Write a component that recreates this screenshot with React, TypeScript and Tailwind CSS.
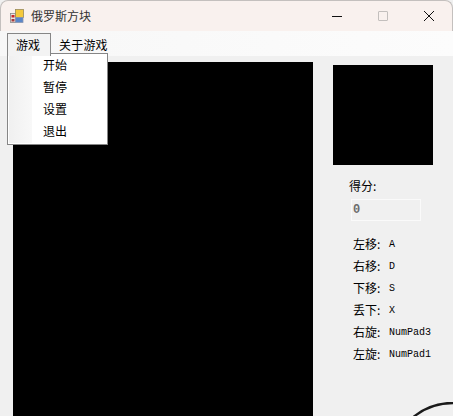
const font = { cjk: "font-['Noto_Sans_CJK_SC','Liberation_Sans',sans-serif]" };

const keys = [
  ["左移:", "A"],
  ["右移:", "D"],
  ["下移:", "S"],
  ["丢下:", "X"],
  ["右旋:", "NumPad3"],
  ["左旋:", "NumPad1"],
];

function AppIcon() {
  return (
    <svg width="14" height="14" viewBox="0 0 14 14" className="shrink-0">
      <rect x="0.5" y="4.5" width="5" height="9" fill="#e8e4e0" stroke="#8a8a8a" strokeWidth="0.8" />
      <rect x="1.5" y="6" width="3" height="2.5" fill="#c8262a" />
      <rect x="1.5" y="10" width="3" height="2.5" fill="#a83a3a" />
      <rect x="5.5" y="0.5" width="8" height="8" fill="#f5c93c" stroke="#9a8a5a" strokeWidth="0.8" />
      <rect x="5.5" y="8.5" width="7.5" height="5" fill="#5a86c8" stroke="#8a96b0" strokeWidth="0.8" />
    </svg>
  );
}

export default function App() {
  return (
    <div className={`relative w-[453px] h-[416px] overflow-hidden bg-[#f0f0f0] ${font.cjk} text-[12px] text-black`}>
      {/* title bar */}
      <div className="h-[31px] flex items-center bg-[#f9f1ee] rounded-t-lg border-t border-x border-[#c4c0be] pl-[9px]">
        <AppIcon />
        <span className="ml-[7px] text-[#333]">俄罗斯方块</span>
        <div className="ml-auto flex items-center">
          <svg width="12" height="12" viewBox="0 0 12 12" className="mr-[35px]">
            <path d="M1 6.5h10" stroke="#111" strokeWidth="1" />
          </svg>
          <div className="w-[10px] h-[10px] border border-[#c3bfbd] rounded-[1px] mr-[35px]" />
          <svg width="12" height="12" viewBox="0 0 12 12" className="mr-[17px]">
            <path d="M1 1l10 10M11 1L1 11" stroke="#111" strokeWidth="1" />
          </svg>
        </div>
      </div>

      {/* menu bar */}
      <div className="h-[25px] flex items-end bg-gradient-to-r from-[#f7f7f7] to-[#fcfcfc] pl-[7px]">
        <div className="h-[23px] w-[44px] flex items-center pl-[8px] bg-[#f3f3f3] border-x border-t border-[#868686] z-10">游戏</div>
        <div className="h-[23px] pl-[8px] flex items-center tracking-[0.2px]">关于游戏</div>
      </div>

      {/* game area */}
      <div className="flex pl-[13px] pt-[6px]">
        <div className="w-[300px] h-[354px] bg-black shrink-0" />
        <div className="ml-[20px] pt-[3px] flex flex-col">
          <div className="w-[100px] h-[100px] bg-black" />
          <div className="ml-[16px] mt-[13px] leading-[16px]">得分:</div>
          <div className="ml-[18px] mt-[5px] w-[70px] h-[22px] flex items-center pl-[1px] border border-[#fafafa] text-[#6d6d6d] font-['Liberation_Mono',monospace] text-[12px] font-bold">0</div>
          <div className="ml-[20px] mt-[12px] flex flex-col">
            {keys.map(([label, key]) => (
              <div key={label} className="h-[22px] flex items-center whitespace-nowrap">
                <span className="w-[36px]">{label}</span>
                <span className="font-['Liberation_Mono',monospace] text-[10px]">{key}</span>
              </div>
            ))}
          </div>
        </div>
      </div>

      {/* dropdown */}
      <div className="absolute left-[7px] top-[53px] w-[101px] h-[92px] bg-white border border-[#868686] pl-[1px]">
        <div className="absolute left-[1px] top-[1px] bottom-[1px] w-[23px] bg-gradient-to-r from-[#f0f0f0] to-[#f8f8f8]" />
        {["开始", "暂停", "设置", "退出"].map((item) => (
          <div key={item} className="relative h-[22px] flex items-center pl-[34px]">{item}</div>
        ))}
      </div>

      {/* round shape cut off by the corner */}
      <svg width="40" height="14" viewBox="0 0 40 14" className="absolute right-0 bottom-0">
        <circle cx="40" cy="64" r="63" fill="none" stroke="#1a1a1a" strokeWidth="2.5" />
      </svg>
    </div>
  );
}
